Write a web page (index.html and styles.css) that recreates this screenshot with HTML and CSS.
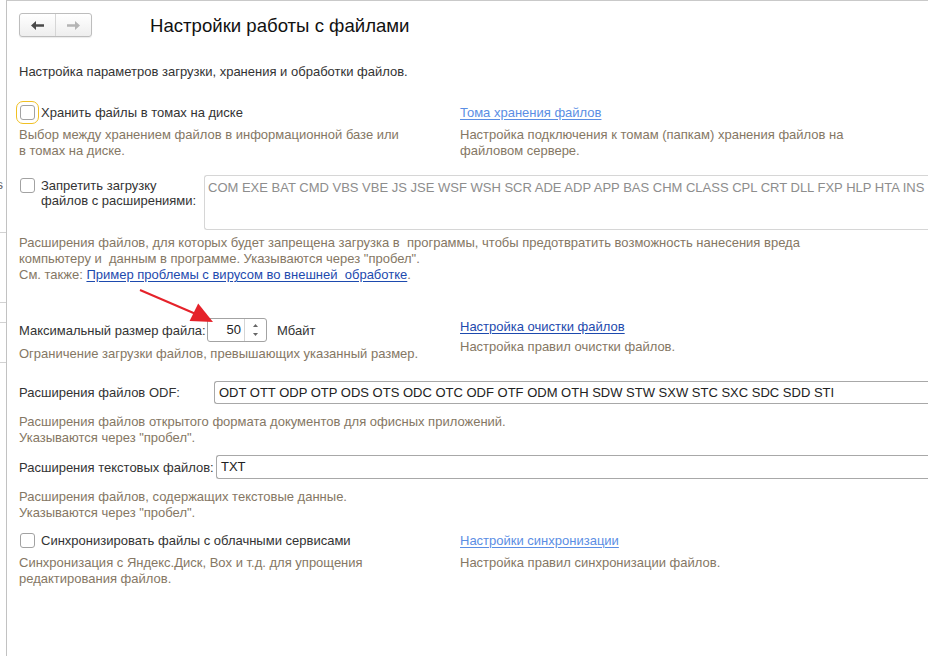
FILE: index.html
```html
<!DOCTYPE html>
<html lang="ru">
<head>
<meta charset="utf-8">
<title>Настройки работы с файлами</title>
<link rel="stylesheet" href="styles.css">
</head>
<body>
<div class="page">
  <aside class="side">
    <span class="side-text">ios</span>
    <span class="side-rule r1"></span>
    <span class="side-rule r2"></span>
    <span class="side-rule r3"></span>
    <span class="side-rule r4"></span>
  </aside>
  <main class="main">
    <header class="head">
      <div class="nav">
        <button class="nav-btn back" type="button" aria-label="Назад">
          <svg width="13" height="9" viewBox="0 0 13 9"><path d="M0 4.5 L5 0 L5 3.2 L13 3.2 L13 5.8 L5 5.8 L5 9 Z" fill="#4a4a4a"/></svg>
        </button>
        <button class="nav-btn fwd" type="button" aria-label="Вперёд">
          <svg width="13" height="9" viewBox="0 0 13 9"><path d="M13 4.5 L8 0 L8 3.2 L0 3.2 L0 5.8 L8 5.8 L8 9 Z" fill="#b4b4b4"/></svg>
        </button>
      </div>
      <h1 class="title">Настройки работы с файлами</h1>
    </header>

    <p class="intro">Настройка параметров загрузки, хранения и обработки файлов.</p>

    <section class="pair row-store">
      <div class="col">
        <div class="check"><span class="box focus"></span><span class="check-label">Хранить файлы в томах на диске</span></div>
        <p class="note">Выбор между хранением файлов в информационной базе или<br>в томах на диске.</p>
      </div>
      <div class="col">
        <div class="link-line"><a class="link light" href="#">Тома хранения файлов</a></div>
        <p class="note">Настройка подключения к томам (папкам) хранения файлов на<br>файловом сервере.</p>
      </div>
    </section>

    <section class="row-deny">
      <div class="check two"><span class="box"></span><span class="check-label">Запретить загрузку<br>файлов с расширениями:</span></div>
      <div class="textarea">COM EXE BAT CMD VBS VBE JS JSE WSF WSH SCR ADE ADP APP BAS CHM CLASS CPL CRT DLL FXP HLP HTA INS ISP ITS JAR MSC MSI MSP MST OCX PCD PIF REG SCT SHB SHS SYS URL VB WSC</div>
    </section>
    <p class="note desc-deny">Расширения файлов, для которых будет запрещена загрузка в&nbsp; программы, чтобы предотвратить возможность нанесения вреда<br>компьютеру и&nbsp; данным в программе. Указываются через "пробел".<br>См. также: <a class="link dark" href="#">Пример проблемы с вирусом во внешней&nbsp; обработке</a>.</p>

    <section class="pair row-size">
      <div class="col">
        <div class="field-line">
          <span class="label size-label">Максимальный размер файла:</span>
          <div class="spin">
            <span class="spin-value">50</span>
            <span class="spin-btns">
              <svg width="5" height="3" viewBox="0 0 5 3"><path d="M0 3 L2.5 0 L5 3 Z" fill="#666"/></svg>
              <svg width="5" height="3" viewBox="0 0 5 3"><path d="M0 0 L2.5 3 L5 0 Z" fill="#666"/></svg>
            </span>
          </div>
          <span class="label unit">Мбайт</span>
        </div>
        <p class="note">Ограничение загрузки файлов, превышающих указанный размер.</p>
      </div>
      <div class="col">
        <div class="link-line"><a class="link dark" href="#">Настройка очистки файлов</a></div>
        <p class="note">Настройка правил очистки файлов.</p>
      </div>
    </section>

    <section class="field-line row-odf">
      <span class="label odf-label">Расширения файлов ODF:</span>
      <div class="input">ODT OTT ODP OTP ODS OTS ODC OTC ODF OTF ODM OTH SDW STW SXW STC SXC SDC SDD STI</div>
    </section>
    <p class="note desc-odf">Расширения файлов открытого формата документов для офисных приложений.<br>Указываются через "пробел".</p>

    <section class="field-line row-txt">
      <span class="label txt-label">Расширения текстовых файлов:</span>
      <div class="input">TXT</div>
    </section>
    <p class="note desc-txt">Расширения файлов, содержащих текстовые данные.<br>Указываются через "пробел".</p>

    <section class="pair row-sync">
      <div class="col">
        <div class="check"><span class="box"></span><span class="check-label">Синхронизировать файлы с облачными сервисами</span></div>
        <p class="note">Синхронизация с Яндекс.Диск, Box и т.д. для упрощения<br>редактирования файлов.</p>
      </div>
      <div class="col">
        <div class="link-line"><a class="link light" href="#">Настройки синхронизации</a></div>
        <p class="note">Настройка правил синхронизации файлов.</p>
      </div>
    </section>

    <svg class="pointer" width="90" height="48" viewBox="0 0 90 48" aria-hidden="true">
      <line x1="3" y1="6" x2="60" y2="30.5" stroke="#e5222a" stroke-width="2"/>
      <path d="M76 38 L52.6 37 L61.2 19.5 Z" fill="#e5222a"/>
    </svg>
  </main>
</div>
</body>
</html>
```

FILE: styles.css
```css
* { box-sizing: border-box; }

html, body {
  margin: 0;
  padding: 0;
}

body {
  width: 928px;
  height: 656px;
  overflow: hidden;
  background: #fff;
  font-family: "Liberation Sans", Arial, sans-serif;
  font-size: 13px;
  color: #333;
}

.page {
  display: flex;
  height: 656px;
}

/* partially visible neighbouring panel */
.side {
  width: 6px;
  flex: none;
  display: flex;
  flex-direction: column;
  overflow: hidden;
}

.side-text {
  margin-top: 177px;
  line-height: 15px;
  text-align: right;
  padding-right: 3px;
  white-space: nowrap;
  color: #666;
  direction: rtl;
}

.side-rule {
  display: block;
  height: 1px;
  background: #d2d2d2;
}

.side-rule.r1 { margin-top: 40px; }
.side-rule.r2 { margin-top: 69px; }
.side-rule.r3 { margin-top: 19px; }
.side-rule.r4 { margin-top: 39px; }

.main {
  flex: 1;
  min-width: 0;
  position: relative;
  overflow: hidden;
  border-top: 1px solid #c9c9c9;
  border-left: 1px solid #c2c2c2;
  padding: 12px 0 0 12px;
}

/* header */
.head {
  display: flex;
  align-items: flex-start;
  height: 24px;
}

.nav {
  display: flex;
  width: 73px;
  height: 24px;
  border: 1px solid #bdbdbd;
  border-radius: 3px;
  background: linear-gradient(#ffffff, #eeeeee);
  box-shadow: 0 1px 1px rgba(0, 0, 0, 0.08);
  overflow: hidden;
}

.nav-btn {
  flex: 1;
  display: flex;
  align-items: center;
  justify-content: center;
  padding: 0;
  margin: 0;
  border: 0;
  background: transparent;
}

.nav-btn.back {
  border-right: 1px solid #d6d6d6;
}

.title {
  margin: 0 0 0 58px;
  padding-top: 1px;
  font-size: 18.6px;
  font-weight: normal;
  line-height: 24px;
  color: #111;
  white-space: nowrap;
}

.intro {
  margin: 26px 0 0;
  line-height: 17px;
  color: #333;
}

/* two-column rows */
.pair {
  display: grid;
  grid-template-columns: 441px 1fr;
}

.col {
  min-width: 0;
}

.row-store { margin-top: 24px; }
.row-size  { margin-top: 35px; }
.row-sync  { margin-top: 11px; }

.note {
  margin: 0;
  line-height: 16px;
  color: #857764;
  white-space: nowrap;
}

.pair .note { margin-top: 6px; }
.row-size .note { margin-top: 4px; }

.link-line {
  line-height: 17px;
  height: 17px;
}

.link {
  text-decoration: underline;
  text-underline-offset: 2px;
}

.link.light { color: #5b8ee4; }
.link.dark  { color: #1d4aae; }

/* checkboxes */
.check {
  display: flex;
  align-items: center;
  line-height: 17px;
  height: 17px;
  white-space: nowrap;
}

.box {
  flex: none;
  width: 15px;
  height: 15px;
  margin: 0 6px 0 1px;
  border: 1px solid #a2a2a2;
  border-radius: 3px;
  background: #fff;
}

.box.focus {
  outline: 1px solid #f0c024;
  outline-offset: 3px;
}

.check-label { color: #333; }

.check.two {
  align-items: flex-start;
  height: auto;
  line-height: 15px;
  width: 185px;
  flex: none;
  margin-top: 3px;
}

/* forbidden extensions */
.row-deny {
  display: flex;
  align-items: flex-start;
  margin-top: 16px;
}

.textarea {
  flex: 1;
  min-width: 0;
  height: 55px;
  padding: 4px 3px;
  border: 1px solid #d6d6d6;
  border-right: 0;
  border-radius: 3px 0 0 3px;
  color: #8d8d8d;
  line-height: 16px;
  white-space: nowrap;
  overflow: hidden;
}

.desc-deny {
  margin-top: 5px;
}

/* fields */
.field-line {
  display: flex;
  align-items: center;
  height: 24px;
  white-space: nowrap;
}

.label {
  line-height: 17px;
  flex: none;
}

.size-label { width: 188px; }
.unit { margin-left: 10px; }

.spin {
  display: flex;
  width: 60px;
  height: 24px;
  border: 1px solid #a3a3a3;
  border-radius: 3px;
  flex: none;
}

.spin-value {
  flex: 1;
  text-align: right;
  padding-right: 3px;
  line-height: 22px;
  color: #222;
}

.spin-btns {
  width: 22px;
  border-left: 1px solid #d4d4d4;
  display: flex;
  flex-direction: column;
  align-items: center;
  justify-content: space-between;
  padding: 5px 0 5px;
}

.input {
  flex: 1;
  min-width: 0;
  height: 24px;
  padding: 0 4px;
  border: 1px solid #a8a8a8;
  border-right: 0;
  border-radius: 3px 0 0 3px;
  line-height: 22px;
  color: #222;
  overflow: hidden;
}

.row-odf { margin-top: 19px; height: 23px; }
.row-odf .input { height: 23px; line-height: 21px; }
.odf-label { width: 195px; }

.desc-odf { margin-top: 10px; }

.row-txt { margin-top: 9px; }
.txt-label { width: 197px; }

.desc-txt { margin-top: 10px; }

/* annotation arrow */
.pointer {
  position: absolute;
  left: 130px;
  top: 283px;
  pointer-events: none;
}
```
